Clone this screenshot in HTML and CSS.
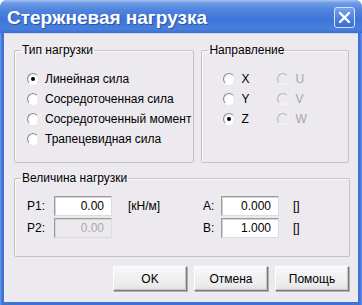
FILE: index.html
```html
<!DOCTYPE html>
<html lang="ru">
<head>
    <meta charset="UTF-8">
    <title>Стержневая нагрузка</title>
    <link rel="stylesheet" href="styles.css">
</head>
<body>
    <div class="window">
        <div class="titlebar">
            <span class="title">Стержневая нагрузка</span>
            <button class="close" type="button">
                <svg width="13" height="13" viewBox="0 0 13 13">
                    <path d="M2 2 L11 11 M11 2 L2 11" stroke="#fff" stroke-width="2.4" stroke-linecap="round"/>
                </svg>
            </button>
        </div>
        <div class="client">
            <div class="top-row">
                <fieldset class="group group-type">
                    <legend>Тип нагрузки</legend>
                    <div class="group-body">
                        <label class="radio checked"><span class="dot"></span>Линейная сила</label>
                        <label class="radio"><span class="dot"></span>Сосредоточенная сила</label>
                        <label class="radio"><span class="dot"></span>Сосредоточенный момент</label>
                        <label class="radio"><span class="dot"></span>Трапецевидная сила</label>
                    </div>
                </fieldset>
                <fieldset class="group group-dir">
                    <legend>Направление</legend>
                    <div class="group-body dir-grid">
                        <label class="radio"><span class="dot"></span>X</label>
                        <label class="radio disabled"><span class="dot"></span>U</label>
                        <label class="radio"><span class="dot"></span>Y</label>
                        <label class="radio disabled"><span class="dot"></span>V</label>
                        <label class="radio checked"><span class="dot"></span>Z</label>
                        <label class="radio disabled"><span class="dot"></span>W</label>
                    </div>
                </fieldset>
            </div>
            <fieldset class="group group-value">
                <legend>Величина нагрузки</legend>
                <div class="group-body value-grid">
                    <span class="lbl">P1:</span>
                    <div class="field">0.00</div>
                    <span class="unit">[кН/м]</span>
                    <span class="lbl">A:</span>
                    <div class="field">0.000</div>
                    <span class="unit unit-ab">[]</span>

                    <span class="lbl">P2:</span>
                    <div class="field disabled">0.00</div>
                    <span class="unit"></span>
                    <span class="lbl">B:</span>
                    <div class="field">1.000</div>
                    <span class="unit unit-ab">[]</span>
                </div>
            </fieldset>
            <div class="buttons">
                <button class="btn" type="button">OK</button>
                <button class="btn" type="button">Отмена</button>
                <button class="btn" type="button">Помощь</button>
            </div>
        </div>
    </div>
</body>
</html>
```
FILE: styles.css
```css
body {
    margin: 0;
    background: #ffffff;
    font-family: "Liberation Sans", Arial, sans-serif;
    font-size: 12px;
    color: #000;
}
.window {
    width: 362px;
    height: 305px;
    box-sizing: border-box;
    display: flex;
    flex-direction: column;
    border-radius: 7px 7px 0 0;
    background: #3f73d6;
    background: linear-gradient(to right, #6e9be6 0, #3f73d6 2px, #3f73d6 360px, #6e9be6 362px);
}
.titlebar {
    height: 33px;
    display: flex;
    align-items: center;
    justify-content: space-between;
    padding: 0 7px 0 7px;
    border-radius: 7px 7px 0 0;
    background: linear-gradient(#a9c3f0 0, #6e9be6 3px, #4f84de 10px, #3e74d8 20px, #4a80dc 29px, #3b6fd2 33px);
}
.title {
    color: #fff;
    font-weight: bold;
    font-size: 19px;
    text-shadow: 1px 1px 0 #2a55a8;
    margin-top: 2px;
}
.close {
    width: 21px;
    height: 21px;
    padding: 0;
    margin-top: 1px;
    display: flex;
    align-items: center;
    justify-content: center;
    border: 1px solid #d8e4f8;
    border-radius: 3px;
    background: linear-gradient(#7aa4ea, #4a7ddc 60%, #3d70d2);
}
.client {
    flex: 1;
    margin: 0 4px 3px 4px;
    padding: 9px 9px 0 10px;
    background: #eceaee;
    border-top: 1px solid #c9d6ee;
}
.top-row {
    display: flex;
    gap: 7px;
}
.group {
    margin: 0;
    border: 1px solid #c5c3bf;
    border-radius: 2px;
    box-shadow: inset 1px 1px 0 #fafafa;
    padding: 0;
    box-sizing: border-box;
}
.group legend {
    padding: 0 1px;
    margin-left: 6px;
    line-height: 14px;
}
.group-type {
    width: 181px;
    height: 120px;
}
.group-type .group-body {
    padding: 12px 0 0 12px;
}
.group-dir {
    width: 148px;
    height: 120px;
}
.group-dir .group-body {
    padding: 12px 0 0 21px;
}
.radio {
    display: flex;
    align-items: center;
    height: 20px;
    white-space: nowrap;
}
.radio .dot {
    width: 10px;
    height: 10px;
    margin-right: 6px;
    border-radius: 50%;
    border: 1px solid;
    border-color: #8c8c8c #e4e4e4 #ffffff #8c8c8c;
    background: radial-gradient(circle at 65% 65%, #ffffff 45%, #e2e2e2 100%);
    display: flex;
    align-items: center;
    justify-content: center;
}
.radio.checked .dot::after {
    content: "";
    width: 4px;
    height: 4px;
    border-radius: 50%;
    background: #000;
}
.radio.disabled {
    color: #a6a6a6;
}
.radio.disabled .dot {
    background: #eceaee;
    border-color: #b4b4b4 #f0f0f0 #f6f6f6 #b4b4b4;
}
.dir-grid {
    display: grid;
    grid-template-columns: 54px 54px;
}
.group-value {
    margin-top: 8px;
    width: 336px;
    height: 86px;
}
.value-grid {
    display: grid;
    grid-template-columns: 27px 58px 91px 18px 58px auto;
    grid-auto-rows: 20px;
    row-gap: 2px;
    align-items: center;
    padding: 11px 0 0 12px;
}
.field {
    height: 20px;
    box-sizing: border-box;
    border: 1px solid;
    border-color: #9c9c9c #dcdcdc #dcdcdc #9c9c9c;
    box-shadow: inset 1px 1px 0 #d4d4d4;
    background: #fff;
    text-align: right;
    padding-right: 7px;
    line-height: 19px;
}
.field.disabled {
    background: #eceaee;
    color: #a8a8a8;
}
.unit {
    padding-left: 16px;
}
.unit.unit-ab {
    padding-left: 14px;
}
.buttons {
    display: flex;
    justify-content: flex-end;
    gap: 7px;
    margin-top: 9px;
}
.btn {
    width: 74px;
    height: 25px;
    padding: 0;
    font-family: "Liberation Sans", Arial, sans-serif;
    font-size: 12px;
    font-weight: normal;
    color: #000;
    border: 1px solid;
    border-color: #ffffff #7a7a7a #7a7a7a #ffffff;
    box-shadow: 1px 1px 0 #b0b0b0, inset -1px -1px 0 #c8c8c8;
    background: linear-gradient(#f8f8f8, #ebeaec 80%, #e0dfe2);
}
```
